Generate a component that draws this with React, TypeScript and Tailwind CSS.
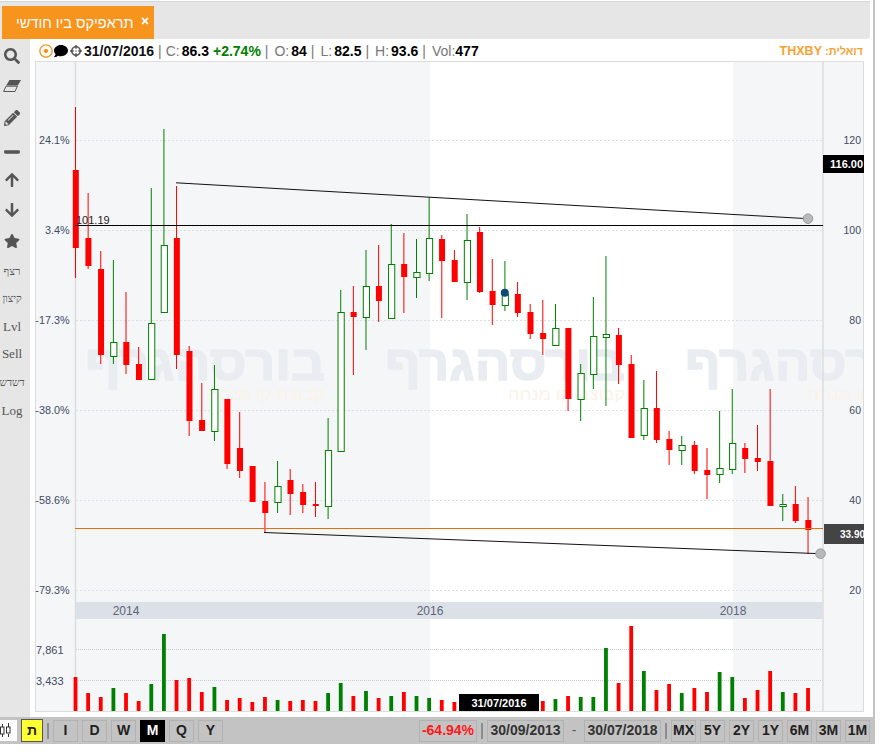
import React from 'react';
import {
  FaSearch,
  FaPencilAlt,
  FaMinus,
  FaArrowUp,
  FaArrowDown,
  FaStar,
  FaTimes,
  FaRegDotCircle,
  FaComment,
  FaCrosshairs,
} from 'react-icons/fa';

const RED = '#ff0000';
const GREEN = '#008000';

// [up, high, bodyTop, bodyBottom, low] in screen pixels
const candles: [number, number, number, number, number][] = [
  [0, 107, 170, 248, 278],
  [0, 193, 238, 266, 269],
  [0, 251, 269, 355, 364],
  [1, 260, 342, 356, 364],
  [0, 292, 342, 365, 374],
  [0, 347, 364, 380, 380],
  [1, 188, 323, 379, 379],
  [1, 129, 245, 312, 312],
  [0, 186, 238, 355, 369],
  [0, 346, 351, 421, 436],
  [0, 383, 420, 431, 431],
  [1, 365, 389, 431, 441],
  [0, 399, 399, 464, 469],
  [0, 412, 448, 471, 478],
  [0, 466, 466, 502, 502],
  [0, 482, 501, 513, 533],
  [1, 461, 486, 502, 513],
  [0, 469, 480, 494, 515],
  [0, 484, 492, 505, 513],
  [0, 482, 504, 506, 517],
  [1, 418, 450, 506, 519],
  [1, 290, 312, 451, 451],
  [0, 286, 312, 317, 375],
  [1, 250, 286, 317, 350],
  [0, 245, 286, 301, 322],
  [1, 224, 264, 318, 318],
  [0, 233, 264, 277, 313],
  [1, 239, 272, 277, 298],
  [1, 197, 238, 273, 281],
  [0, 235, 239, 261, 318],
  [0, 250, 260, 282, 282],
  [1, 214, 240, 282, 300],
  [0, 227, 232, 292, 293],
  [0, 259, 291, 305, 325],
  [1, 261, 294, 305, 311],
  [0, 282, 294, 313, 317],
  [0, 304, 312, 334, 339],
  [0, 300, 333, 339, 355],
  [1, 304, 328, 345, 345],
  [0, 328, 328, 399, 411],
  [1, 364, 373, 399, 421],
  [1, 297, 336, 374, 389],
  [1, 256, 334, 337, 406],
  [0, 328, 335, 365, 384],
  [0, 355, 364, 438, 438],
  [1, 380, 408, 435, 440],
  [0, 371, 408, 440, 443],
  [0, 431, 439, 450, 465],
  [1, 436, 445, 450, 465],
  [0, 441, 445, 471, 474],
  [0, 448, 470, 475, 499],
  [1, 411, 468, 474, 483],
  [1, 389, 443, 469, 474],
  [0, 443, 448, 459, 473],
  [0, 425, 458, 462, 471],
  [0, 389, 461, 506, 506],
  [1, 494, 504, 506, 521],
  [0, 486, 504, 521, 523],
  [0, 497, 520, 530, 554],
];

// top of each volume bar, screen pixels
const volumes = [
  677, 693, 697, 688, 693, 701, 684, 634, 680, 678, 692, 687, 700, 698, 702, 697, 700, 701, 700, 701,
  693, 683, 696, 691, 698, 696, 692, 696, 698, 700, 702, 702, 702, 702, 702, 702, 702, 701, 699, 696,
  697, 697, 648, 683, 626, 671, 690, 684, 693, 688, 692, 672, 677, 698, 690, 671, 692, 693, 688,
];

const pctLabels = [
  ['24.1%', 140],
  ['3.4%', 230],
  ['-17.3%', 320],
  ['-38.0%', 410],
  ['-58.6%', 500],
  ['-79.3%', 590],
] as const;

const priceLabels = [
  ['120', 140],
  ['100', 230],
  ['80', 320],
  ['60', 410],
  ['40', 500],
  ['20', 590],
] as const;

const cx = (i: number) => 75.5 + 12.63 * i;

const Watermark = ({ x }: { x: number }) => (
  <g style={{ fontFamily: '"Liberation Sans", sans-serif' }}>
    <text
      x={x + 240}
      y={380}
      fontSize={50}
      fontWeight={700}
      fill="#e9edf1"
      stroke="#e9edf1"
      strokeWidth={1.5}
      textLength={240}
      lengthAdjust="spacingAndGlyphs"
      direction="rtl"
    >
      בורסהגרף
    </text>
    <text
      x={x + 240}
      y={400}
      fontSize={17}
      fill="#fbf3e9"
      textLength={117}
      lengthAdjust="spacingAndGlyphs"
      direction="rtl"
    >
      קבוצת קו מנחה
    </text>
  </g>
);

const Chart = () => (
  <svg width={829} height={651} viewBox="35 61 829 651" className="block" style={{ fontFamily: '"Liberation Sans", Arial, sans-serif' }}>
    <rect x={35} y={61} width={829} height={651} fill="#f5f6f8" />
    <rect x={430} y={62} width={303} height={649} fill="#ffffff" />

    <Watermark x={85} />
    <Watermark x={385} />
    <Watermark x={685} />

    {/* grid */}
    {[140.5, 230.5, 320.5, 410.5, 500.5, 590.5].map((y) => (
      <line key={y} x1={76} x2={823} y1={y} y2={y} stroke="#dcdfe3" strokeDasharray="2 2" />
    ))}
    {[649.5, 680.5].map((y) => (
      <line key={y} x1={76} x2={823} y1={y} y2={y} stroke="#c8ccd6" strokeDasharray="1 1" />
    ))}

    {/* year strip */}
    <rect x={76} y={602} width={746} height={17} fill="#dce0e7" />
    {[
      ['2014', 126],
      ['2016', 430],
      ['2018', 733],
    ].map(([t, x]) => (
      <text key={t} x={x} y={615} fontSize={12} fill="#5c6679" textAnchor="middle">
        {t}
      </text>
    ))}

    {/* axes */}
    <line x1={75.5} x2={75.5} y1={62} y2={711} stroke="#dddddd" strokeWidth={1.5} />
    <line x1={823} x2={823} y1={62} y2={711} stroke="#dddddd" strokeWidth={1.5} />
    <line x1={35} x2={864} y1={711.5} y2={711.5} stroke="#dddddd" />
    <rect x={35.5} y={61.5} width={828} height={650} fill="none" stroke="#dddddd" />

    {pctLabels.map(([t, y]) => (
      <text key={t} x={69.5} y={y + 4} fontSize={10.8} fill="#3f4b66" textAnchor="end">
        {t}
      </text>
    ))}
    {priceLabels.map(([t, y]) => (
      <text key={t} x={861} y={y + 4} fontSize={10.5} fill="#3f4b66" textAnchor="end">
        {t}
      </text>
    ))}
    <text x={36} y={654} fontSize={11} fill="#3f4b66">7,861</text>
    <text x={36} y={685} fontSize={11} fill="#3f4b66">3,433</text>

    {/* candles */}
    {candles.map(([up, high, top, bottom, low], i) => {
      const x = cx(i);
      const c = up ? GREEN : RED;
      return (
        <g key={i}>
          <line x1={x} x2={x} y1={high} y2={low} stroke={c} />
          {up ? (
            <rect x={x - 2.7} y={top + 0.5} width={6.2} height={Math.max(bottom - top, 1)} fill="#ffffff" stroke={c} />
          ) : (
            <rect x={x - 2.7} y={top} width={6} height={bottom - top} fill={c} />
          )}
        </g>
      );
    })}

    {/* volume */}
    {volumes.map((top, i) => (
      <rect key={i} x={cx(i) - 1.9} y={top} width={3.8} height={711 - top} fill={candles[i][0] ? GREEN : RED} />
    ))}

    {/* drawn levels and trend lines */}
    <line x1={75} x2={823} y1={225.5} y2={225.5} stroke="#000000" />
    <text x={76} y={224} fontSize={11} fill="#222222">101.19</text>
    <line x1={75} x2={823} y1={528.5} y2={528.5} stroke="#d9730a" />
    <line x1={176} y1={182.8} x2={808} y2={218.7} stroke="#111111" />
    <circle cx={808} cy={218.7} r={4.8} fill="#b9b9b9" stroke="#9a9a9a" />
    <line x1={264} y1={532.5} x2={820} y2={553.7} stroke="#111111" />
    <circle cx={820.5} cy={553.7} r={4.8} fill="#b9b9b9" stroke="#9a9a9a" />
    <circle cx={504.8} cy={292.8} r={4} fill="#0e4a73" />

    {/* price tags */}
    <rect x={823} y={155} width={41} height={18} fill="#000000" />
    <text x={830} y={168} fontSize={11} fontWeight={700} fill="#ffffff">116.00</text>
    <rect x={824} y={524} width={40} height={20} fill="#444444" />
    <text x={840} y={538} fontSize={10} fontWeight={700} fill="#ffffff">33.90</text>

    {/* crosshair date */}
    <rect x={459} y={694} width={80} height={17} fill="#000000" />
    <text x={499} y={707} fontSize={11} fontWeight={700} fill="#ffffff" textAnchor="middle">31/07/2016</text>
  </svg>
);

const Eraser = () => (
  <svg width="18" height="12" viewBox="0 0 18 12">
    <path d="M6.5 0H18l-3.2 5.6H3.2z" fill="#555555" />
    <path d="M3 6.2h11.4L12 11.5H0.6z" fill="#e6e6e6" stroke="#555555" strokeWidth="1" />
  </svg>
);

const tools = [
  { mt: 'mt-[7px]', node: <FaSearch size={16} /> },
  { mt: 'mt-[10px]', node: <Eraser /> },
  { mt: 'mt-[12px]', node: <FaPencilAlt size={16} /> },
  { mt: 'mt-[14px]', node: <FaMinus size={18} /> },
  { mt: 'mt-[8px]', node: <FaArrowUp size={16} /> },
  { mt: 'mt-[10px]', node: <FaArrowDown size={16} /> },
  { mt: 'mt-[11px]', node: <FaStar size={16} /> },
  { mt: 'mt-[10px]', node: <span className="text-[11px]">רצף</span> },
  { mt: 'mt-[8px]', node: <span className="text-[10.5px]">קיצון</span> },
  { mt: 'mt-[8px]', node: <span className="text-[13px]">Lvl</span> },
  { mt: 'mt-[7px]', node: <span className="text-[13px]">Sell</span> },
  { mt: 'mt-[9px]', node: <span className="text-[10.5px]">דשדש</span> },
  { mt: 'mt-[8px]', node: <span className="text-[13px]">Log</span> },
];

const Stat = ({ label, value, tight }: { label: string; value: string; tight?: boolean }) => (
  <div className={`flex ${tight ? 'gap-0' : 'gap-[2px]'}`}>
    <span className="text-[#777777] font-normal">{label}</span>
    <span className="text-black font-bold">{value}</span>
  </div>
);

const Sep = () => <span className="text-[#777777] font-normal">|</span>;

const RangeBtn = ({ children, active }: { children: React.ReactNode; active?: boolean }) => (
  <div
    className={`w-[25px] h-[22px] flex items-center justify-center border font-bold text-[14px] ${
      active ? 'bg-black text-white border-black' : 'border-[#b2b2b2] text-[#222222]'
    }`}
  >
    {children}
  </div>
);

const VBar = () => <div className="w-[2px] h-[16px] bg-[#8c8c8c]" />;

export default function App() {
  return (
    <div className="w-[880px] h-[753px] bg-white overflow-hidden" style={{ fontFamily: '"Liberation Sans", Arial, sans-serif' }}>
      <div className="w-[875px] h-[744px] border-r-2 border-[#c3c3c3] flex flex-col">
        {/* tab strip */}
        <div className="h-[38px] w-[870px] shrink-0 bg-[#e6e6e6] border-t border-[#d8d8d8] mt-px rounded-br-sm pl-[2px] pt-[4px]">
          <div className="w-[152px] h-[33px] bg-[#f7941e] text-white flex items-center pl-[14px] relative">
            <span dir="rtl" className="text-[14.5px] leading-none mt-px">תראפיקס ביו חודשי</span>
            <FaTimes size={10} className="absolute left-[138px] top-[10px]" />
          </div>
        </div>

        <div className="flex flex-1 min-h-0">
          {/* side tools */}
          <div
            className="w-[30px] shrink-0 bg-[#e6e6e6] flex flex-col text-[#555555]"
            style={{ fontFamily: '"Liberation Serif", serif' }}
          >
            {tools.map((t, i) => (
              <div key={i} className={`h-[20px] w-[24px] flex items-center justify-center whitespace-nowrap ${t.mt}`}>
                {t.node}
              </div>
            ))}
          </div>

          <div className="flex-1 min-w-0">
            {/* quote line */}
            <div className="h-[20px] mt-[2px] pl-[9px] pr-[10px] flex items-center text-[14px] leading-none">
              <FaRegDotCircle size={14} className="text-[#f7941e]" />
              <FaComment size={14} className="text-black ml-[1px]" />
              <FaCrosshairs size={12} className="text-[#555555] ml-[2px]" />
              <span className="font-bold text-[#111111] ml-[2px] mr-[4px]">31/07/2016</span>
              <div className="flex items-center gap-[4px]">
                <Sep />
                <Stat label="C:" value="86.3" />
                <span className="font-bold text-[#008000]">+2.74%</span>
                <Sep />
                <div className="ml-[2px]">
                  <Stat label="O:" value="84" />
                </div>
                <Sep />
                <div className="ml-[2px]">
                  <Stat label="L:" value="82.5" />
                </div>
                <Sep />
                <div className="ml-[2px]">
                  <Stat label="H:" value="93.6" />
                </div>
                <Sep />
                <div className="ml-[2px]">
                  <Stat label="Vol:" value="477" tight />
                </div>
              </div>
              <span dir="rtl" className="ml-auto text-[11px] font-bold text-[#f9a233]">
                דואלית: <span className="text-[12.5px]">THXBY</span>
              </span>
            </div>
            <div className="ml-[5px]">
              <Chart />
            </div>
          </div>
        </div>

        {/* range bar */}
        <div className="h-[27px] shrink-0 bg-[#c3c3c3] flex items-center gap-[4px] pr-[3px] text-[14px]">
          <div className="w-[17px] h-[21px] bg-white flex items-center overflow-hidden">
            <svg width="17" height="21" viewBox="0 0 17 21" fill="none" stroke="#333333" strokeWidth="1">
              <path d="M2.5 4v3M2.5 14v3M8.5 3v4M8.5 14v3" />
              <rect x="0.5" y="7" width="3.5" height="7" />
              <rect x="6.5" y="7" width="3.5" height="6" />
            </svg>
          </div>
          <div className="w-[22px] h-[23px] bg-[#ffff33] border border-[#555555] flex items-center justify-center font-bold text-[#222222] text-[14px]">
            ת
          </div>
          <VBar />
          <RangeBtn>I</RangeBtn>
          <RangeBtn>D</RangeBtn>
          <RangeBtn>W</RangeBtn>
          <RangeBtn active>M</RangeBtn>
          <RangeBtn>Q</RangeBtn>
          <RangeBtn>Y</RangeBtn>

          <div className="ml-auto h-[22px] w-[58px] border border-[#b2b2b2] flex items-center justify-center font-bold text-[#ff1a1a]">
            -64.94%
          </div>
          <VBar />
          <div className="h-[22px] w-[77px] border border-[#b2b2b2] flex items-center justify-center text-[#333333] font-bold">30/09/2013</div>
          <span className="w-[12px] text-center text-[#555555]">-</span>
          <div className="h-[22px] w-[77px] border border-[#b2b2b2] flex items-center justify-center text-[#333333] font-bold">30/07/2018</div>
          <VBar />
          <RangeBtn>MX</RangeBtn>
          <RangeBtn>5Y</RangeBtn>
          <RangeBtn>2Y</RangeBtn>
          <RangeBtn>1Y</RangeBtn>
          <RangeBtn>6M</RangeBtn>
          <RangeBtn>3M</RangeBtn>
          <RangeBtn>1M</RangeBtn>
        </div>
      </div>
    </div>
  );
}
